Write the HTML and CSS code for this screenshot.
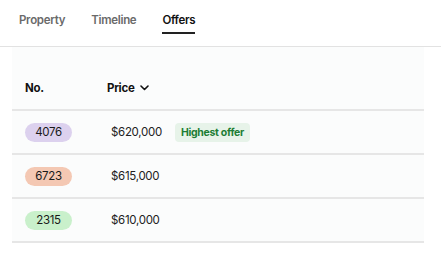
FILE: index.html
```html
<!DOCTYPE html>
<html lang="en">
<head>
  <meta charset="UTF-8">
  <meta name="viewport" content="width=device-width, initial-scale=1.0">
  <title>Offers</title>
  <link rel="stylesheet" href="styles.css">
</head>
<body>
<nav class="tabs">
  <div class="tab">Property</div>
  <div class="tab">Timeline</div>
  <div class="tab active">Offers</div>
</nav>
<div class="panel">
  <div class="row head">
    <div class="col-no">No.</div>
    <div class="col-price">Price
      <svg class="chev" width="9" height="6" viewBox="0 0 9 6"><polyline points="1,1 4.5,4.5 8,1" fill="none" stroke="#111" stroke-width="1.6" stroke-linecap="round" stroke-linejoin="round"/></svg>
    </div>
  </div>
  <div class="row">
    <div class="col-no"><span class="pill purple">4076</span></div>
    <div class="col-price">$620,000 <span class="tag">Highest offer</span></div>
  </div>
  <div class="row">
    <div class="col-no"><span class="pill orange">6723</span></div>
    <div class="col-price">$615,000</div>
  </div>
  <div class="row">
    <div class="col-no"><span class="pill green">2315</span></div>
    <div class="col-price">$610,000</div>
  </div>
</div>
</body>
</html>
```

FILE: styles.css
```css
body {
  font-family: 'Inter', sans-serif;
  margin: 0;
  background: #fff;
  color: #222;
  letter-spacing: -0.3px;
}
.tabs {
  display: flex;
  gap: 26px;
  padding-left: 19px;
  height: 46px;
  border-bottom: 1px solid #e2e2e2;
}
.tab {
  font-size: 11.5px;
  line-height: 16px;
  padding-top: 12px;
  height: 20px;
  color: #6a6a6a;
  font-weight: 600;
}
.tab.active {
  color: #111;
  border-bottom: 2px solid #222;
}
.panel {
  width: 412px;
  margin-left: 12px;
  background: #fbfcfc;
}
.row {
  display: flex;
  align-items: center;
  height: 42px;
  border-bottom: 2px solid #e6e6e6;
  font-size: 11.5px;
}
.row.head {
  height: 64px;
  padding-top: 20px;
  box-sizing: border-box;
  font-weight: 700;
  color: #111;
}
.col-no {
  width: 99px;
  padding-left: 13px;
  box-sizing: border-box;
}
.col-price {
  display: flex;
  align-items: center;
}
.head .col-no { width: 95px; }
.chev { margin-left: 6px; }
.pill {
  display: inline-block;
  width: 47px;
  height: 19px;
  line-height: 19px;
  border-radius: 10px;
  text-align: center;
  color: #1a1a1a;
}
.purple { background: #dcd1ee; }
.orange { background: #f4c8b3; }
.green { background: #c9f0cb; }
.tag {
  margin-left: 13px;
  background: #e7f3e9;
  color: #1c7d34;
  font-weight: 700;
  font-size: 10.5px;
  height: 19px;
  line-height: 19px;
  padding: 0 6px;
  border-radius: 4px;
}
```
